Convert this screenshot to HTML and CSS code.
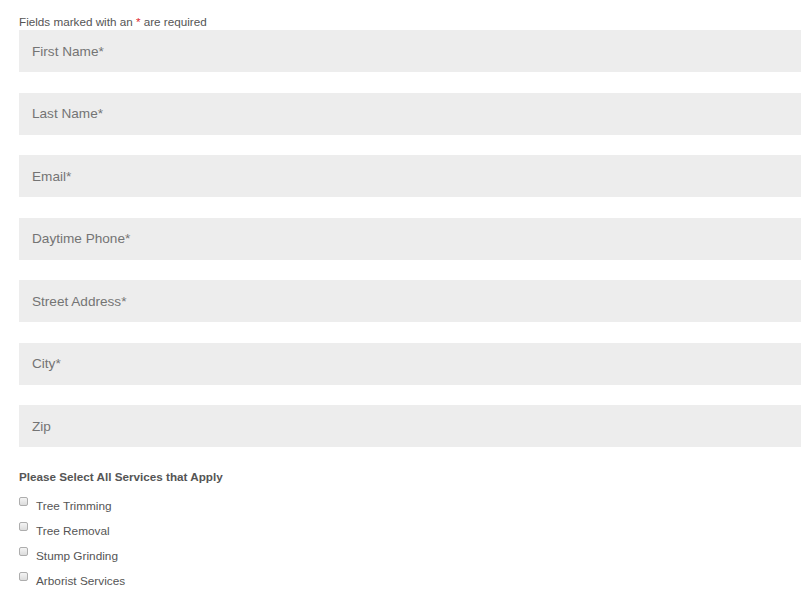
FILE: index.html
```html
<!DOCTYPE html>
<html>

<head>
    <title>Request a Quote</title>
    <meta charset="utf-8">
    <link rel="stylesheet" href="styles.css">
</head>

<body>
    <form class='quote-form'>
        <p class='required-note'>Fields marked with an <span class='star'>*</span> are required</p>
        <div class='fields'>
            <input type='text' class='field' placeholder='First Name*'>
            <input type='text' class='field' placeholder='Last Name*'>
            <input type='email' class='field' placeholder='Email*'>
            <input type='tel' class='field' placeholder='Daytime Phone*'>
            <input type='text' class='field' placeholder='Street Address*'>
            <input type='text' class='field' placeholder='City*'>
            <input type='text' class='field' placeholder='Zip'>
        </div>
        <fieldset class='services'>
            <legend class='services-title'>Please Select All Services that Apply</legend>
            <label class='service'><input type='checkbox' class='check'> <span>Tree Trimming</span></label>
            <label class='service'><input type='checkbox' class='check'> <span>Tree Removal</span></label>
            <label class='service'><input type='checkbox' class='check'> <span>Stump Grinding</span></label>
            <label class='service'><input type='checkbox' class='check'> <span>Arborist Services</span></label>
        </fieldset>
    </form>
</body>

</html>
```

FILE: styles.css
```css
* {
    box-sizing: border-box;
}

body {
    margin: 0;
    font-family: "Liberation Sans", Arial, sans-serif;
    color: #555;
    background: #fff;
    overflow: hidden;
}

.quote-form {
    padding: 13px 0 0 19px;
    width: 820px;
}

.required-note {
    margin: 0;
    font-size: 11.7px;
    line-height: 17px;
    color: #555;
}

.star {
    color: #e0242b;
}

.fields {
    display: flex;
    flex-direction: column;
    gap: 20.5px;
}

.field {
    display: block;
    width: 100%;
    height: 42px;
    margin: 0;
    padding: 0 13px;
    border: 0;
    background-color: #ededed;
    font-family: "Liberation Sans", Arial, sans-serif;
    font-size: 13.6px;
    color: #555;
    outline: none;
}

.field::placeholder {
    color: #747474;
    opacity: 1;
}

.services {
    margin: 0;
    padding: 22px 0 0 0;
    border: 0;
    display: flex;
    flex-direction: column;
}

.services-title {
    float: left;
    padding: 0;
    margin-bottom: 7px;
    font-size: 11.7px;
    font-weight: bold;
    line-height: 16px;
    color: #555;
}

.service {
    display: flex;
    align-items: flex-start;
    height: 25px;
    font-size: 11.8px;
    line-height: 16px;
    color: #555;
}

.service span {
    padding-top: 6px;
}

.check {
    appearance: none;
    -webkit-appearance: none;
    flex: none;
    width: 9px;
    height: 9px;
    margin: 5px 8px 0 0;
    border: 1px solid #adadad;
    border-radius: 2px;
    background: linear-gradient(#f4f4f4, #dcdcdc);
}
```
